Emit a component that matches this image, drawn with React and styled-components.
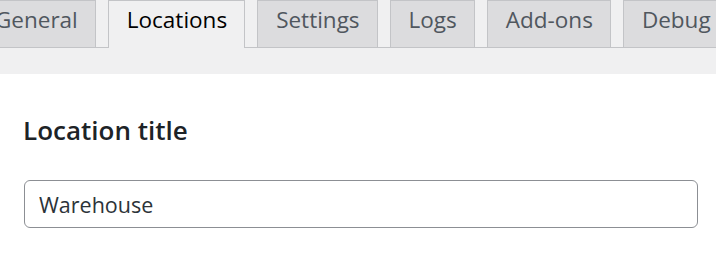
import styled, { createGlobalStyle } from 'styled-components';

const GlobalStyle = createGlobalStyle`
    html, body {
        margin: 0;
        padding: 0;
        background: #fff;
        font-family: "Open Sans", "Noto Sans", sans-serif;
    }
`;

const tabs = ['General', 'Locations', 'Settings', 'Logs', 'Add-ons', 'Debug'];

function App() {
    return (
        <>
            <GlobalStyle />
            <Page>
                <TabBar>
                    {tabs.map((tab) => (
                        <Tab key={tab} active={tab === 'Locations'}>{tab}</Tab>
                    ))}
                </TabBar>
                <Spacer />
                <Content>
                    <Title>Location title</Title>
                    <TextInput defaultValue="Warehouse" />
                </Content>
            </Page>
        </>
    )
}

export default App

const Page = styled.div`
    width: 716px;
    height: 259px;
    overflow: hidden;
    background: #fff;
`;

const TabBar = styled.div`
    display: flex;
    gap: 12px;
    height: 48px;
    margin-left: -24px;
    background: #f0f0f1;
    border-bottom: 1px solid #c3c4c7;
    box-sizing: border-box;
    align-items: flex-start;
    white-space: nowrap;
`;

const Tab = styled.div`
    flex: none;
    box-sizing: border-box;
    padding: 3px 17px 0 18px;
    font-size: 22.5px;
    font-weight: 500;
    border: 1px solid #c3c4c7;
    border-bottom: none;
    background: ${(p) => (p.active ? '#f0f0f1' : '#dcdcde')};
    color: ${(p) => (p.active ? '#000' : '#50575e')};
    height: ${(p) => (p.active ? '48px' : '47px')};
    margin-bottom: ${(p) => (p.active ? '-1px' : '0')};
`;

const Spacer = styled.div`
    height: 26px;
    background: #f0f0f1;
`;

const Content = styled.div`
    padding: 40px 18px 0 24px;
`;

const Title = styled.h2`
    margin: 0 0 34px -1px;
    font-size: 26px;
    font-weight: 600;
    color: #1d2327;
    line-height: 32px;
`;

const TextInput = styled.input`
    display: block;
    width: 100%;
    height: 48px;
    box-sizing: border-box;
    padding: 0 14px;
    border: 1px solid #8c8f94;
    border-radius: 6px;
    font-family: inherit;
    font-size: 21.5px;
    color: #2c3338;
    background: #fff;
    outline: none;
`;
